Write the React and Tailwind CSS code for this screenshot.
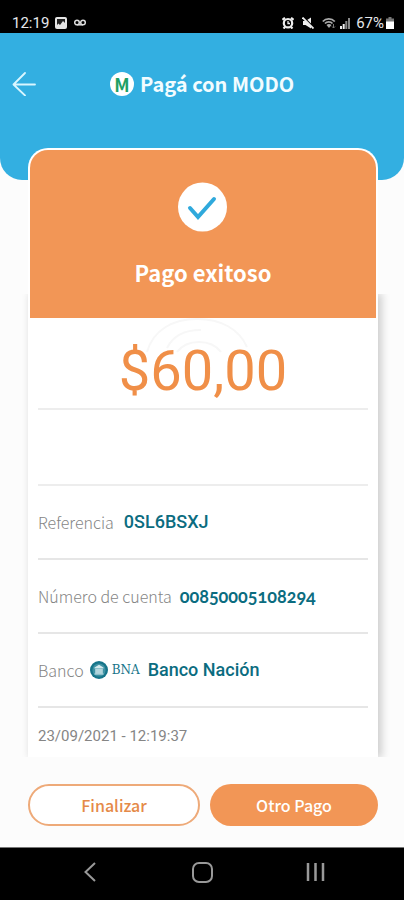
import React from 'react';

function StatusBar() {
  return (
    <div className="flex h-[33px] items-end justify-between bg-black pr-2.5 pl-3 font-['Roboto',sans-serif] text-[15px] leading-5 text-gray-200">
      <div className="flex items-center gap-1.5">
        <span>12:19</span>
        <svg className="size-3" viewBox="0 0 12 12" aria-hidden="true">
          <rect width="12" height="12" rx="2" fill="#e5e5e5" />
          <path d="M2 2h8v4L8 4 5 8 3.500 6.500 2 8z" fill="#222" />
        </svg>
        <svg className="h-3 w-3.5" viewBox="0 0 14 12" fill="none" stroke="#ddd" strokeWidth="1.500" aria-hidden="true">
          <circle cx="4" cy="5.500" r="2.300" />
          <circle cx="10" cy="5.500" r="2.300" />
          <path d="M4 7.800h6" />
        </svg>
      </div>
      <div className="flex items-center gap-1">
        <svg className="mr-1 size-3" viewBox="0 0 12 12" fill="none" stroke="#eee" strokeWidth="2.200" aria-hidden="true">
          <circle cx="6" cy="6.200" r="4.200" />
          <path d="M6 4v2.500h2" strokeWidth="1.300" />
          <path d="M.5 2.800 3 .8M11.500 2.800 9 .8M1.500 11.500l1.500-1.500M10.500 11.500 9 10" />
        </svg>
        <svg className="mr-1 size-3" viewBox="0 0 12 12" aria-hidden="true">
          <path d="M1 4h2.500L9 .5v11L3.500 8H1z" fill="#eee" />
          <path d="M2 1l10 10" stroke="#000" strokeWidth="2" />
          <path d="M.5 .5l11 11" stroke="#eee" strokeWidth="1.800" />
        </svg>
        <svg className="h-3 w-3.5" viewBox="0 0 14 12" fill="none" stroke="#aaa" strokeWidth="1.800" aria-hidden="true">
          <path d="M.8 4.500C4 1 9.500 1 12.800 4.500M3 6.500c2-2.200 5.500-2.200 7.500 0" />
          <path d="M4.500 8 7 11l2.500-3c-1.200-1.500-3.800-1.500-5 0z" fill="#aaa" stroke="none" />
          <path d="M11.500 7v4M10 9.500l1.500 1.500L13 9.500" stroke="#777" strokeWidth="1" />
        </svg>
        <svg className="mr-0.5 h-3 w-2.5" viewBox="0 0 10 12" aria-hidden="true">
          <path d="M0 9h2v3H0zM2.700 7h2v5h-2z" fill="#eee" />
          <path d="M5.300 4h2v8h-2zM8 1h2v11H8z" fill="#888" />
        </svg>
        <div className="flex items-center gap-0.5">
          <span>67%</span>
          <svg className="h-3 w-2" viewBox="0 0 8 12" aria-hidden="true">
            <path d="M2.500 0h3v1.500H8V12H0V1.500h2.500z" fill="#777" />
            <path d="M0 4.500h8V12H0z" fill="#fff" />
          </svg>
        </div>
      </div>
    </div>
  );
}

function Header() {
  return (
    <header className="grid h-[147px] grid-cols-[24px_1fr_24px] items-start rounded-b-[22px] bg-[#33afe1] px-3 pt-[35px]">
      <button type="button" aria-label="Volver" className="flex h-8 items-center">
        <svg className="size-6" viewBox="0 0 24 24" fill="none" stroke="#d9f6ff" strokeWidth="1.800" strokeLinecap="round" strokeLinejoin="round">
          <path d="M13 1 1.500 12.500 13 23.500M2 12.500h21" />
        </svg>
      </button>
      <div className="flex h-8 items-center justify-center gap-1.5">
        <span className="flex size-6 items-center justify-center rounded-full bg-white font-['Noto_Sans_CJK_SC',sans-serif] text-lg leading-6 font-bold text-[#1fa065]">
          M
        </span>
        <h1 className="font-['Noto_Sans_CJK_SC',sans-serif] text-xl leading-8 font-bold text-[#f2fcff]">Pagá con MODO</h1>
      </div>
    </header>
  );
}

function BankLogo() {
  return (
    <span className="mr-2 ml-1.5 flex items-center gap-1 text-[#16758a]">
      <svg className="size-[18px]" viewBox="0 0 18 18" aria-hidden="true">
        <circle cx="9" cy="9" r="9" fill="#16758a" />
        <circle cx="9" cy="9" r="6.600" fill="#3f92a3" />
        <path d="M4.500 6.500 9 3.800l4.500 2.700v1h-9z" fill="#d5e9ed" />
        <path d="M5.500 7.500h7v5h-7z" fill="#8fc2cc" />
        <path d="M6 8v4.500M8 8v4.500M10 8v4.500M12 8v4.500M4.500 13h9" stroke="#d5e9ed" />
      </svg>
      <span className="font-['DejaVu_Serif',serif] text-xs leading-5">BNA</span>
    </span>
  );
}

function Row({ label, children }) {
  return (
    <div className="flex h-[74px] items-center border-b-2 border-[#e6e6e6]">
      <dt className="font-['Noto_Sans_CJK_SC',sans-serif] text-base leading-6 font-light text-[#858585]">{label}</dt>
      {children}
    </div>
  );
}

function Receipt() {
  return (
    <div className="-mt-6 flex grow flex-col overflow-hidden pr-[26px] pl-7">
      <div className="grow bg-white px-2.5 pt-6 shadow-[3px_0_8px_1px_rgba(0,0,0,0.18)]">
        <div className="relative flex h-[92px] items-center justify-center border-b-2 border-[#ededed] pt-4">
          <svg className="absolute top-0 left-1/2 h-16 w-36 -translate-x-1/2" viewBox="0 0 144 64" fill="none" stroke="#f7f7f7" strokeWidth="2" aria-hidden="true">
            <path d="M16 34C22 12 42 1 66 1c24 0 42 10 50 28M36 30c6-12 16-18 34-18M46 34c6-8 14-10 22-10s16 2 22 10" />
          </svg>
          <p className="relative font-['Roboto',sans-serif] text-[56px] leading-[64px] text-[#f08f48]">$60,00</p>
        </div>
        <div className="h-[76px] border-b-2 border-[#ededed]" />
        <dl>
          <Row label="Referencia">
            <dd className="ml-2.5 font-['Roboto',sans-serif] text-lg leading-6 font-medium text-[#0b6c80]">0SL6BSXJ</dd>
          </Row>
          <Row label="Número de cuenta">
            <dd className="ml-2 font-['Lato',sans-serif] text-lg leading-6 font-bold text-[#0b6c80] oldstyle-nums">00850005108294</dd>
          </Row>
          <Row label="Banco">
            <dd className="flex items-center">
              <BankLogo />
              <span className="font-['Roboto',sans-serif] text-lg leading-6 font-medium text-[#0b6c80]">Banco Nación</span>
            </dd>
          </Row>
        </dl>
        <time className="block pt-4 pb-2 font-['Roboto',sans-serif] text-[15px] leading-6 text-[#858585]">23/09/2021 - 12:19:37</time>
      </div>
    </div>
  );
}

function NavBar() {
  return (
    <nav className="grid h-[53px] grid-cols-[1fr_72px_1fr] items-center border-t border-[#777] bg-black px-4 pb-1">
      <button type="button" aria-label="Atrás" className="flex justify-center">
        <svg className="size-6" viewBox="0 0 24 24" fill="none" stroke="#999" strokeWidth="2">
          <path d="M16 3 6.500 12 16 21" />
        </svg>
      </button>
      <button type="button" aria-label="Inicio" className="flex justify-center">
        <svg className="size-6" viewBox="0 0 24 24" fill="none" stroke="#999" strokeWidth="2">
          <rect x="3" y="3" width="19" height="19" rx="6" />
        </svg>
      </button>
      <button type="button" aria-label="Recientes" className="flex justify-center">
        <svg className="size-6" viewBox="0 0 24 24" fill="none" stroke="#999" strokeWidth="2.500">
          <path d="M7 3v18M14.500 3v18M22 3v18" />
        </svg>
      </button>
    </nav>
  );
}

export default function App() {
  return (
    <div className="flex min-h-screen flex-col bg-[#fcfcfc]">
      <StatusBar />
      <Header />
      <main className="flex grow flex-col">
        <section className="relative z-10 -mt-8 mr-[26px] ml-7 flex h-[170px] flex-col items-center rounded-t-[20px] border-2 border-b-0 border-white bg-[#f29656] pt-8">
          <svg className="size-[50px]" viewBox="0 0 50 50" aria-hidden="true">
            <circle cx="24.500" cy="25" r="24.500" fill="#fff" />
            <path d="m12 26 8 9L36 17" fill="none" stroke="#2fa9dc" strokeWidth="4" strokeLinecap="round" />
          </svg>
          <h2 className="mt-6 font-['Noto_Sans_CJK_SC',sans-serif] text-[22px] leading-8 font-bold text-white">Pago exitoso</h2>
        </section>
        <Receipt />
      </main>
      <footer className="flex gap-2.5 pt-[27px] pr-[26px] pb-[21px] pl-7 font-['Noto_Sans_CJK_SC',sans-serif] text-base leading-6 font-medium">
        <button type="button" className="h-[42px] flex-1 rounded-full border-2 border-[#eeaa79] bg-white text-[#e58a49]">
          Finalizar
        </button>
        <button type="button" className="h-[42px] flex-1 rounded-full bg-[#f29656] text-white">
          Otro Pago
        </button>
      </footer>
      <NavBar />
    </div>
  );
}
